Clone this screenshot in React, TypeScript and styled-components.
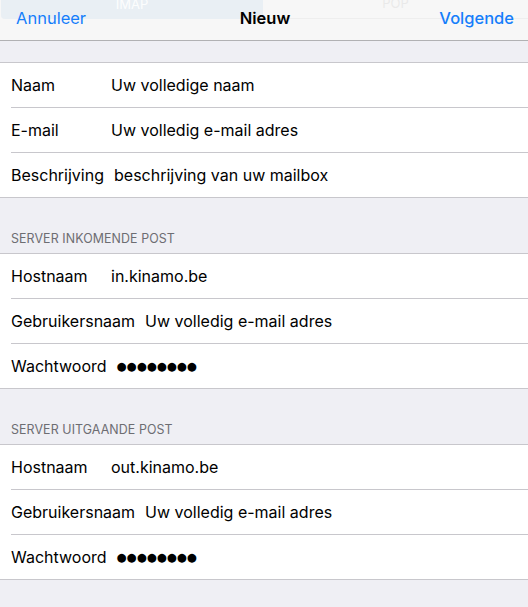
import React from "react";
import styled, { createGlobalStyle } from "styled-components";

const Global = createGlobalStyle`
  html, body { margin: 0; padding: 0; background: #efeff4; }
  body { font-family: Inter, Roboto, "Liberation Sans", Arial, sans-serif; -webkit-font-smoothing: antialiased; }
`;

const Page = styled.div`
  width: 528px;
  min-height: 607px;
  background: #efeff4;
  overflow: hidden;
`;

const NavBar = styled.div`
  position: relative;
  height: 41px;
  box-sizing: border-box;
  background: #f7f7f7;
  border-bottom: 1px solid #b1b1b3;
  display: grid;
  grid-template-columns: 1fr auto 1fr;
  align-items: center;
  padding: 0 14px 4px 16px;
  overflow: hidden;
`;

const Ghost = styled.div`
  position: absolute;
  left: 1px;
  right: 0;
  top: -11px;
  height: 30px;
  display: grid;
  grid-template-columns: 262px 1fr;
  pointer-events: none;
`;

const GhostSeg = styled.div<{ $active?: boolean }>`
  display: flex;
  align-items: flex-end;
  justify-content: center;
  padding-bottom: 9px;
  font-size: 13px;
  line-height: 11px;
  color: ${(p) => (p.$active ? "rgba(255,255,255,0.9)" : "rgba(232,232,232,0.9)")};
  background: ${(p) => (p.$active ? "#e9eff4" : "transparent")};
  border-radius: ${(p) => (p.$active ? "0 0 4px 4px" : "0")};
  border-bottom: ${(p) => (p.$active ? "none" : "1px solid #eeeeee")};
`;

const NavButton = styled.span<{ $bold?: boolean; $align: "left" | "right" }>`
  position: relative;
  font-size: 16.5px;
  color: #157efb;
  font-weight: ${(p) => (p.$bold ? 500 : 400)};
  justify-self: ${(p) => (p.$align === "left" ? "start" : "end")};
`;

const Title = styled.span`
  position: relative;
  font-size: 16.5px;
  font-weight: 600;
  color: #000;
`;

const SectionHeader = styled.div<{ $height: number }>`
  height: ${(p) => p.$height}px;
  box-sizing: border-box;
  display: flex;
  align-items: flex-end;
  padding: 0 0 7px 11px;
  font-size: 12.4px;
  letter-spacing: 0.1px;
  color: #6d6d72;
`;

const Group = styled.div`
  background: #fff;
  border-top: 1px solid #c8c7cc;
  border-bottom: 1px solid #c8c7cc;
`;

const Row = styled.div`
  height: 44px;
  margin-left: 11px;
  display: flex;
  align-items: center;
  gap: 10px;
  font-size: 16px;
  color: #000;
  & + & {
    border-top: 1px solid #c8c7cc;
  }
`;

const Label = styled.span`
  min-width: 90px;
`;

const Value = styled.span``;

const Dots = styled.span`
  font-family: "DejaVu Sans", sans-serif;
  font-size: 11.5px;
  letter-spacing: 0;
`;

type Field = { label: string; value: string; secret?: boolean };

const Section = ({ title, fields, headerHeight }: { title?: string; fields: Field[]; headerHeight: number }) => (
  <>
    <SectionHeader $height={headerHeight}>{title}</SectionHeader>
    <Group>
      {fields.map((f) => (
        <Row key={f.label}>
          <Label>{f.label}</Label>
          {f.secret ? <Dots>{f.value}</Dots> : <Value>{f.value}</Value>}
        </Row>
      ))}
    </Group>
  </>
);

export default function App() {
  return (
    <Page>
      <Global />
      <NavBar>
        <Ghost>
          <GhostSeg $active>IMAP</GhostSeg>
          <GhostSeg>POP</GhostSeg>
        </Ghost>
        <NavButton $align="left">Annuleer</NavButton>
        <Title>Nieuw</Title>
        <NavButton $align="right" $bold>Volgende</NavButton>
      </NavBar>
      <Section
        headerHeight={21}
        fields={[
          { label: "Naam", value: "Uw volledige naam" },
          { label: "E-mail", value: "Uw volledig e-mail adres" },
          { label: "Beschrijving", value: "beschrijving van uw mailbox" },
        ]}
      />
      <Section
        headerHeight={55}
        title="SERVER INKOMENDE POST"
        fields={[
          { label: "Hostnaam", value: "in.kinamo.be" },
          { label: "Gebruikersnaam", value: "Uw volledig e-mail adres" },
          { label: "Wachtwoord", value: "●●●●●●●●", secret: true },
        ]}
      />
      <Section
        headerHeight={55}
        title="SERVER UITGAANDE POST"
        fields={[
          { label: "Hostnaam", value: "out.kinamo.be" },
          { label: "Gebruikersnaam", value: "Uw volledig e-mail adres" },
          { label: "Wachtwoord", value: "●●●●●●●●", secret: true },
        ]}
      />
    </Page>
  );
}
